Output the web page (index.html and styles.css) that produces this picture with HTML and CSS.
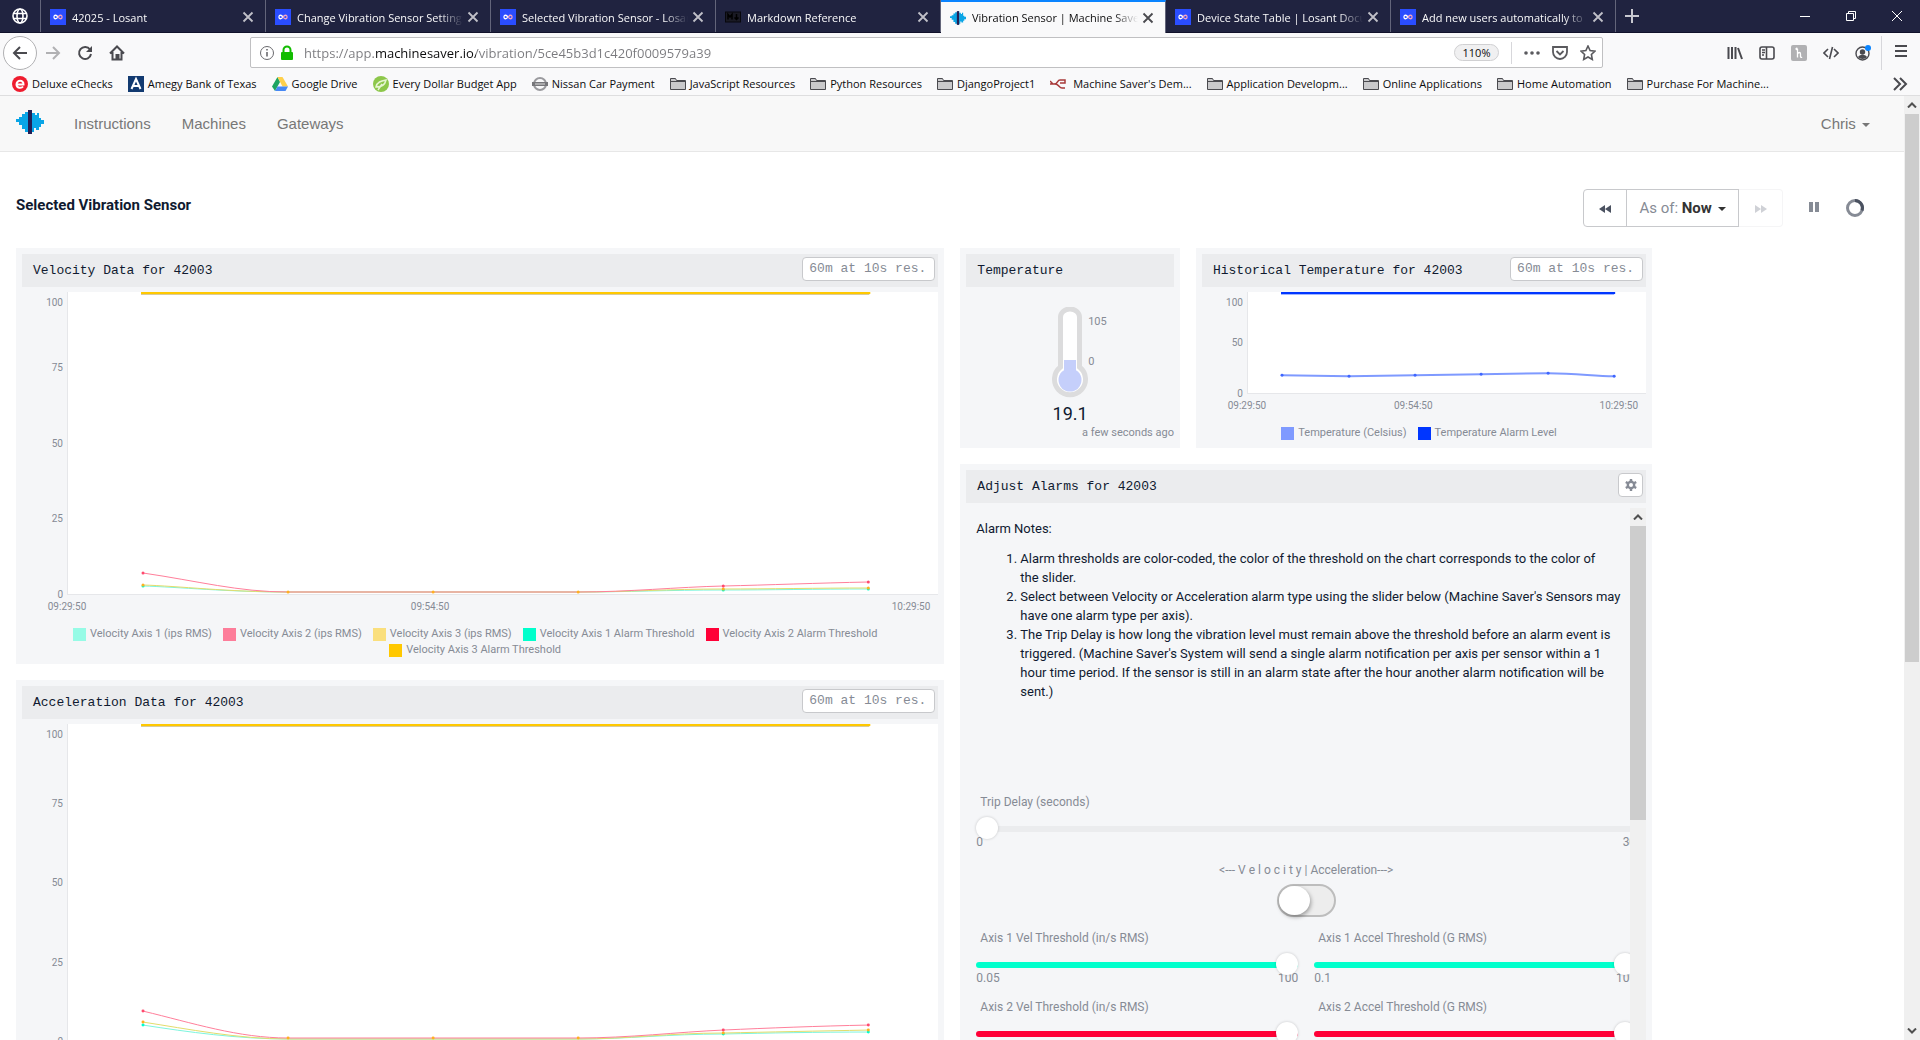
FILE: index.html
```html
<!DOCTYPE html>
<html lang="en">

<head>
    <meta charset="UTF-8">
    <meta name="viewport" content="width=device-width, initial-scale=1.0">
    <title>Vibration Sensor | Machine Saver</title>
    <link rel="stylesheet" href="styles.css">
</head>

<body>
    <!-- shared icons -->
    <svg class="defs" width="0" height="0">
        <symbol id="losant" viewBox="0 0 16 16">
            <rect width="16" height="16" fill="#2a4dff" />
            <path d="M8 8C6.500 5.800 4 5.500 4 8s2.500 2.200 4 0" fill="none" stroke="#fff" stroke-width="1.300" />
            <path d="M8 8c1.500 2.200 4 2.500 4 0S9.500 5.800 8 8" fill="none" stroke="#f3a3c0" stroke-width="1.300" />
        </symbol>
        <symbol id="saver" viewBox="0 0 28 24">
            <path d="M0 9h3V7h3V4h3V2h4V0h3v24h-3v-2H9v-3H6v-4H3v-3H0z" fill="#0aa5e6" />
            <path d="M16 3h3v2h2V3h2v5h2v2h3v4h-3v3h-2v3h-3v-2h-2v4h-2z" fill="#0aa5e6" />
            <path d="M12 0h4v24h-4z" fill="#231f54" />
        </symbol>
        <symbol id="close" viewBox="0 0 12 12">
            <path d="M1.500 1.500l9 9M10.500 1.500l-9 9" stroke="currentColor" stroke-width="1.800" />
        </symbol>
        <symbol id="folder" viewBox="0 0 16 16">
            <path d="M.5 13.500V2.500h5l1 2h9v9z" fill="#c9c9cb" stroke="#4a4a4f" />
            <path d="M1 5.500h14" stroke="#4a4a4f" />
        </symbol>
        <symbol id="up" viewBox="0 0 10 6">
            <path d="M1 5.500l4-4 4 4" fill="none" stroke="#505050" stroke-width="2" />
        </symbol>
        <symbol id="down" viewBox="0 0 10 6">
            <path d="M1 .5l4 4 4-4" fill="none" stroke="#505050" stroke-width="2" />
        </symbol>
    </svg>

    <div class="tab-bar">
        <div class="tab pinned">
            <svg width="18" height="18" viewBox="0 0 18 18" fill="none" stroke="#fff" stroke-width="1.600">
                <circle cx="9" cy="9" r="7" />
                <ellipse cx="9" cy="9" rx="3" ry="7" />
                <path d="M2.500 6.500h13M2.500 11.500h13" />
            </svg>
        </div>
        <div class="tab">
            <svg class="icon"><use href="#losant" /></svg>
            <span class="tab-title">42025 - Losant</span>
            <button class="close" aria-label="Close tab"><svg><use href="#close" /></svg></button>
        </div>
        <div class="tab">
            <svg class="icon"><use href="#losant" /></svg>
            <span class="tab-title">Change Vibration Sensor Settings</span>
            <button class="close" aria-label="Close tab"><svg><use href="#close" /></svg></button>
        </div>
        <div class="tab">
            <svg class="icon"><use href="#losant" /></svg>
            <span class="tab-title">Selected Vibration Sensor - Losant</span>
            <button class="close" aria-label="Close tab"><svg><use href="#close" /></svg></button>
        </div>
        <div class="tab">
            <svg class="icon" viewBox="0 0 16 16">
                <rect x=".5" y="3" width="15" height="10" fill="#1a1a24" stroke="#07070c" />
                <path d="M3 10.500v-5l2 2.500 2-2.500v5M11.500 5v5M9.500 8.500l2 2 2-2" fill="none" stroke="#000" stroke-width="1.500" />
            </svg>
            <span class="tab-title">Markdown Reference</span>
            <button class="close" aria-label="Close tab"><svg><use href="#close" /></svg></button>
        </div>
        <div class="tab active">
            <svg class="icon"><use href="#saver" /></svg>
            <span class="tab-title">Vibration Sensor | Machine Saver</span>
            <button class="close" aria-label="Close tab"><svg><use href="#close" /></svg></button>
        </div>
        <div class="tab">
            <svg class="icon"><use href="#losant" /></svg>
            <span class="tab-title">Device State Table | Losant Documentation</span>
            <button class="close" aria-label="Close tab"><svg><use href="#close" /></svg></button>
        </div>
        <div class="tab">
            <svg class="icon"><use href="#losant" /></svg>
            <span class="tab-title">Add new users automatically to</span>
            <button class="close" aria-label="Close tab"><svg><use href="#close" /></svg></button>
        </div>
        <button class="new-tab" aria-label="New tab">
            <svg width="14" height="14" viewBox="0 0 14 14"><path d="M7 0v14M0 7h14" stroke="#c8c8d0" stroke-width="2" /></svg>
        </button>
        <div class="window-btns">
            <button aria-label="Minimize"><svg viewBox="0 0 10 10"><path d="M0 5.500h10" /></svg></button>
            <button aria-label="Restore"><svg viewBox="0 0 10 10"><path d="M.5 2.500h7v7h-7zM2.500 2.500v-2h7v7h-2" /></svg></button>
            <button aria-label="Close"><svg viewBox="0 0 10 10"><path d="M0 0l10 10M10 0L0 10" /></svg></button>
        </div>
    </div>

    <div class="nav-bar">
        <button class="back" aria-label="Back">
            <svg viewBox="0 0 16 16"><path d="M15 8H2M8 2L2 8l6 6" /></svg>
        </button>
        <button class="tool forward" aria-label="Forward">
            <svg viewBox="0 0 16 16"><path d="M1 8h13M8 2l6 6-6 6" /></svg>
        </button>
        <button class="tool" aria-label="Reload">
            <svg viewBox="0 0 16 16"><path d="M13 4.500A6 6 0 1 0 14 9" /><path d="M15 1v6H9z" fill="#4a4a4f" stroke="none" /></svg>
        </button>
        <button class="tool" aria-label="Home">
            <svg viewBox="0 0 16 16"><path d="M1 8.500L8 1.500l7 7M3.500 7v7.500h9V7M7.500 14v-4h2v4" /></svg>
        </button>
        <div class="url-bar">
            <svg class="icon" viewBox="0 0 16 16" fill="none" stroke="#6a6a6e">
                <circle cx="8" cy="8" r="6.500" />
                <path d="M8 7v4.500M8 4v1.600" stroke-width="1.600" />
            </svg>
            <svg class="icon" viewBox="0 0 16 16">
                <path d="M4.500 7.500V5a3.500 3.500 0 0 1 7 0v2.500" fill="none" stroke="#12bc00" stroke-width="2" />
                <rect x="2" y="7" width="12" height="8" rx="1" fill="#12bc00" />
            </svg>
            <input class="url" type="text" aria-label="Address" value="https://app.machinesaver.io/vibration/5ce45b3d1c420f0009579a39">
            <button class="zoom">110%</button>
            <span class="url-line"></span>
            <svg class="icon" viewBox="0 0 16 16" fill="#5a5a5e"><circle cx="2" cy="8" r="1.800" /><circle cx="8" cy="8" r="1.800" /><circle cx="14" cy="8" r="1.800" /></svg>
            <svg class="icon" viewBox="0 0 16 16" fill="none" stroke="#5a5a5e" stroke-width="1.800"><path d="M1 2h14v5a7 7 0 0 1-14 0z" /><path d="M4.500 6L8 9.500 11.500 6" /></svg>
            <svg class="icon" viewBox="0 0 16 16" fill="none" stroke="#5a5a5e" stroke-width="1.600"><path d="M8 1l2.100 4.500 4.900.6-3.600 3.400.9 4.900L8 12l-4.300 2.400.9-4.900L1 6.100l4.900-.6z" /></svg>
        </div>
        <div class="nav-tools">
            <svg class="icon" viewBox="0 0 16 16" stroke="#4a4a4f" stroke-width="2"><path d="M1.500 2v12M5 2v12M8.500 2v12M11 3l4 11" /></svg>
            <svg class="icon" viewBox="0 0 16 16" fill="none" stroke="#4a4a4f" stroke-width="1.600"><rect x="1" y="2" width="14" height="12" rx="2" /><path d="M7.500 2v12M3 5h3M3 7.500h3M3 10h2" /></svg>
            <svg class="icon" viewBox="0 0 16 16"><rect width="16" height="16" rx="2" fill="#b1b1b3" /><path d="M6.500 3.500c-2-1-2 1.500 0 1v8M6.500 9c1-2 3-2 3 0v2.500c0 1 1 1 1.500.5" fill="none" stroke="#fff" stroke-width="1.300" /></svg>
            <svg class="icon" viewBox="0 0 16 16" fill="none" stroke="#4a4a4f" stroke-width="1.600"><path d="M5 4L1 8l4 4M11 4l4 4-4 4M9.500 2l-3 12" /></svg>
            <svg class="icon" viewBox="0 0 16 16"><circle cx="7.500" cy="8.500" r="6.500" fill="none" stroke="#4a4a4f" stroke-width="1.400" /><circle cx="7.500" cy="7" r="2.700" fill="#4a4a4f" /><path d="M3 12c2-3 7-3 9 0-2 2.500-7 2.500-9 0z" fill="#4a4a4f" /><circle cx="13" cy="3" r="3" fill="#0a84ff" /></svg>
        </div>
        <button class="menu" aria-label="Menu">
            <svg class="icon" viewBox="0 0 16 16" stroke="#4a4a4f" stroke-width="2"><path d="M2 3h12M2 8h12M2 13h12" /></svg>
        </button>
    </div>

    <div class="bookmarks">
        <a href="#"><svg class="icon" viewBox="0 0 16 16"><circle cx="8" cy="8" r="8" fill="#ef1c2e" /><path d="M4.500 8.500h7c.3-5-7-5-7 0 0 4 5 4 6.500 2" fill="none" stroke="#fff" stroke-width="2" /></svg>Deluxe eChecks</a>
        <a href="#"><svg class="icon" viewBox="0 0 16 16"><rect width="16" height="16" fill="#123a70" /><path d="M3.500 13L8 3l4.500 10M5 10h6" fill="none" stroke="#fff" stroke-width="2" /></svg>Amegy Bank of Texas</a>
        <a href="#"><svg class="icon" viewBox="0 0 16 16"><path d="M5.500 1L0 10.500 3 15l5-9z" fill="#1da462" /><path d="M5.500 1h5L16 10.500h-5.500z" fill="#ffd04b" /><path d="M3 15l2.500-4.500H16L13.500 15z" fill="#4688f4" /></svg>Google Drive</a>
        <a href="#"><svg class="icon" viewBox="0 0 16 16"><circle cx="8" cy="8" r="8" fill="#8dc74a" /><path d="M3 11c1-5 5-6 10-7-1 5-4 7-10 7zM5 14l4-6" fill="none" stroke="#e6f5d2" stroke-width="1.500" /></svg>Every Dollar Budget App</a>
        <a href="#"><svg class="icon" viewBox="0 0 16 16"><circle cx="8" cy="8" r="6" fill="none" stroke="#9a9a9e" stroke-width="2" /><rect y="6" width="16" height="4" fill="#77777b" /><path d="M3 8h10" stroke="#ddd" /></svg>Nissan Car Payment</a>
        <a href="#"><svg class="icon"><use href="#folder" /></svg>JavaScript Resources</a>
        <a href="#"><svg class="icon"><use href="#folder" /></svg>Python Resources</a>
        <a href="#"><svg class="icon"><use href="#folder" /></svg>DjangoProject1</a>
        <a href="#"><svg class="icon" viewBox="0 0 16 16" fill="none" stroke="#a83a3a" stroke-width="1.500"><path d="M0 8h4c4 0 3-4 6-4h5v3h-5M0 5l3 3M5 8c4 0 4 4 7 4h3" /></svg>&nbsp;Machine Saver's Dem...</a>
        <a href="#"><svg class="icon"><use href="#folder" /></svg>Application Developm...</a>
        <a href="#"><svg class="icon"><use href="#folder" /></svg>Online Applications</a>
        <a href="#"><svg class="icon"><use href="#folder" /></svg>Home Automation</a>
        <a href="#"><svg class="icon"><use href="#folder" /></svg>Purchase For Machine...</a>
        <button class="more" aria-label="More bookmarks"><svg class="icon" viewBox="0 0 16 16" fill="none" stroke="#4a4a4f" stroke-width="2"><path d="M2 2l6 6-6 6M8 2l6 6-6 6" /></svg></button>
    </div>

    <div class="viewport">
        <div class="page">
            <header>
                <a class="logo" href="#" aria-label="Machine Saver"><svg width="28" height="24"><use href="#saver" /></svg></a>
                <nav>
                    <a href="#">Instructions</a>
                    <a href="#">Machines</a>
                    <a href="#">Gateways</a>
                </nav>
                <button class="user">Chris <span class="caret"></span></button>
            </header>

            <main>
                <div class="title-row">
                    <h1>Selected Vibration Sensor</h1>
                    <div class="time-controls">
                        <button class="prev" aria-label="Back in time"><svg width="12" height="8" viewBox="0 0 12 8"><path d="M6 0v8L0 4zM12 0v8L6 4z" fill="#4a5160" /></svg></button>
                        <button class="as-of">As of: <b>Now</b> <span class="caret"></span></button>
                        <button class="next" aria-label="Forward in time" disabled><svg width="12" height="8" viewBox="0 0 12 8"><path d="M0 0v8l6-4zM6 0v8l6-4z" fill="#cfd1d6" /></svg></button>
                    </div>
                    <button class="pause" aria-label="Pause"><svg width="10" height="10" viewBox="0 0 10 10"><path d="M0 0h4v10H0zM6 0h4v10H6z" fill="#868b95" /></svg></button>
                    <svg width="20" height="20" viewBox="0 0 20 20" fill="none" stroke-width="3">
                        <circle cx="10" cy="10" r="7.500" stroke="#868b95" />
                        <path d="M10 2.500a7.500 7.500 0 0 1 7 10" stroke="#4a5160" />
                    </svg>
                </div>

                <div class="dashboard">
                    <div class="column">
                        <section class="block">
                            <div class="block-head">
                                <h2>Velocity Data for 42003</h2>
                                <span class="res">60m at 10s res.</span>
                            </div>
                            <div class="chart velocity">
                                <div class="y-axis"><span>100</span><span>75</span><span>50</span><span>25</span><span>0</span></div>
                                <svg class="plot" viewBox="0 0 870 302" preserveAspectRatio="none">
                                    <path class="line threshold-shade" d="M73 2.500H801" />
                                    <path class="line threshold" d="M73 1H802" />
                                    <path class="line axis1" d="M75 294C110 295 160 300 220 300H510C560 300 600 298 655 298C700 298 750 297 800 297" />
                                    <path class="line axis3" d="M75 293C110 294 160 300 220 300H510C560 300 600 297 655 297C700 297 750 296 800 296" />
                                    <path class="line axis2" d="M75 281C130 289 170 300 220 300H510C560 300 610 295 655 294C700 293 750 291 800 290" />
                                    <g fill="#00ffcc"><circle cx="75" cy="294" r="1.500" /><circle cx="655" cy="298" r="1.500" /><circle cx="800" cy="297" r="1.500" /></g>
                                    <g fill="#ffb020"><circle cx="75" cy="293" r="1.500" /><circle cx="220" cy="300" r="1.500" /><circle cx="365" cy="300" r="1.500" /><circle cx="510" cy="300" r="1.500" /><circle cx="655" cy="297" r="1.500" /><circle cx="800" cy="296" r="1.500" /></g>
                                    <g fill="#ff4a6e"><circle cx="75" cy="281" r="1.500" /><circle cx="655" cy="294" r="1.500" /><circle cx="800" cy="290" r="1.500" /></g>
                                </svg>
                                <div class="x-axis"><span>09:29:50</span><span>09:54:50</span><span class="last">10:29:50</span></div>
                            </div>
                            <ul class="legend">
                                <li class="vel1">Velocity Axis 1 (ips RMS)</li>
                                <li class="vel2">Velocity Axis 2 (ips RMS)</li>
                                <li class="vel3">Velocity Axis 3 (ips RMS)</li>
                                <li class="alarm1">Velocity Axis 1 Alarm Threshold</li>
                                <li class="alarm2">Velocity Axis 2 Alarm Threshold</li>
                                <li class="alarm3">Velocity Axis 3 Alarm Threshold</li>
                            </ul>
                        </section>

                        <section class="block">
                            <div class="block-head">
                                <h2>Acceleration Data for 42003</h2>
                                <span class="res">60m at 10s res.</span>
                            </div>
                            <div class="chart acceleration">
                                <div class="y-axis"><span>100</span><span>75</span><span>50</span><span>25</span><span>0</span></div>
                                <svg class="plot" viewBox="0 0 870 318" preserveAspectRatio="none">
                                    <path class="line threshold-shade" d="M73 2.500H801" />
                                    <path class="line threshold" d="M73 1H802" />
                                    <path class="line axis1" d="M75 302C120 309 170 316 220 316H510C560 316 600 311 655 311C700 310 750 309 800 309" />
                                    <path class="line axis3" d="M75 299C120 306 170 316 220 316H510C560 316 600 310 655 310C700 309 750 308 800 307" />
                                    <path class="line axis2" d="M75 288C125 300 170 315 220 315H510C560 315 610 309 655 307C700 305 750 303 800 302" />
                                    <g fill="#00ffcc"><circle cx="75" cy="302" r="1.500" /><circle cx="655" cy="311" r="1.500" /><circle cx="800" cy="309" r="1.500" /></g>
                                    <g fill="#ffb020"><circle cx="75" cy="299" r="1.500" /><circle cx="220" cy="315" r="1.500" /><circle cx="365" cy="315" r="1.500" /><circle cx="510" cy="315" r="1.500" /><circle cx="655" cy="310" r="1.500" /><circle cx="800" cy="307" r="1.500" /></g>
                                    <g fill="#ff4a6e"><circle cx="75" cy="288" r="1.500" /><circle cx="655" cy="307" r="1.500" /><circle cx="800" cy="302" r="1.500" /></g>
                                </svg>
                            </div>
                        </section>
                    </div>

                    <div class="column">
                        <div class="temps">
                            <section class="block">
                                <div class="block-head">
                                    <h2>Temperature</h2>
                                </div>
                                <div class="gauge">
                                    <svg width="36" height="92" viewBox="0 0 36 92">
                                        <path d="M8.500 60V10a9.500 8 0 0 1 19 0v50a15.500 15.500 0 1 1-19 0z" fill="#fff" stroke="#dcdcdd" stroke-width="5" />
                                        <path d="M12 53h12v11H12z" fill="#c5cffb" />
                                        <circle cx="18" cy="73" r="11.500" fill="#c5cffb" />
                                    </svg>
                                    <div class="scale"><span>105</span><span>0</span></div>
                                </div>
                                <p class="reading">19.1</p>
                                <p class="ago">a few seconds ago</p>
                            </section>

                            <section class="block">
                                <div class="block-head">
                                    <h2>Historical Temperature for 42003</h2>
                                    <span class="res">60m at 10s res.</span>
                                </div>
                                <div class="chart history">
                                    <div class="y-axis"><span>100</span><span>50</span><span>0</span></div>
                                    <svg class="plot" viewBox="0 0 398 102" preserveAspectRatio="none">
                                        <path class="line limit-shade" d="M33 2.500H366" />
                                        <path class="line limit" d="M33 1H367" />
                                        <path class="line temp" d="M34 84L101 85L167 84L233 83L300 82C330 82 345 85 366 85" />
                                        <g fill="#3f66ff"><circle cx="34" cy="84" r="1.500" /><circle cx="101" cy="85" r="1.500" /><circle cx="167" cy="84" r="1.500" /><circle cx="233" cy="83" r="1.500" /><circle cx="300" cy="82" r="1.500" /><circle cx="366" cy="85" r="1.500" /></g>
                                    </svg>
                                    <div class="x-axis"><span>09:29:50</span><span>09:54:50</span><span class="last">10:29:50</span></div>
                                </div>
                                <ul class="legend">
                                    <li class="celsius">Temperature (Celsius)</li>
                                    <li class="alarm-level">Temperature Alarm Level</li>
                                </ul>
                            </section>
                        </div>

                        <section class="block alarms">
                            <div class="block-head">
                                <h2>Adjust Alarms for 42003</h2>
                                <button class="gear" aria-label="Settings">
                                    <svg width="12" height="12" viewBox="0 0 12 12"><circle cx="6" cy="6" r="3.200" fill="none" stroke="#868b95" stroke-width="2.400" /><path d="M6 0v2.500M6 9.500V12M.8 3L3 4.300M9 7.700L11.200 9M11.200 3L9 4.300M3 7.700L.8 9" stroke="#868b95" stroke-width="2.400" /></svg>
                                </button>
                            </div>
                            <div class="scroll-area">
                                <div class="scroll-view">
                                    <form class="alarm-form">
                                        <div class="notes">
                                            <p>Alarm Notes:</p>
                                            <ol>
                                                <li>Alarm thresholds are color-coded, the color of the threshold on the chart corresponds to the color of<br> the slider.</li>
                                                <li>Select between Velocity or Acceleration alarm type using the slider below (Machine Saver's Sensors may<br> have one alarm type per axis).</li>
                                                <li>The Trip Delay is how long the vibration level must remain above the threshold before an alarm event is<br> triggered. (Machine Saver's System will send a single alarm notification per axis per sensor within a 1<br> hour time period. If the sensor is still in an alarm state after the hour another alarm notification will be<br> sent.)</li>
                                            </ol>
                                        </div>
                                        <div class="slider">
                                            <label for="trip">Trip Delay (seconds)</label>
                                            <input type="range" id="trip" min="0" max="30" value="0">
                                            <div class="range"><span>0</span><span>30</span></div>
                                        </div>
                                        <div class="toggle">
                                            <label for="type">&lt;--- V e l o c i t y | Acceleration---&gt;</label>
                                            <input type="checkbox" id="type">
                                        </div>
                                        <div class="sliders">
                                            <div class="slider green">
                                                <label for="vel1">Axis 1 Vel Threshold (in/s RMS)</label>
                                                <input type="range" id="vel1" min="0" max="100" value="100">
                                                <div class="range"><span>0.05</span><span>100</span></div>
                                            </div>
                                            <div class="slider green">
                                                <label for="acc1">Axis 1 Accel Threshold (G RMS)</label>
                                                <input type="range" id="acc1" min="0" max="100" value="100">
                                                <div class="range"><span>0.1</span><span>100</span></div>
                                            </div>
                                            <div class="slider red">
                                                <label for="vel2">Axis 2 Vel Threshold (in/s RMS)</label>
                                                <input type="range" id="vel2" min="0" max="100" value="100">
                                                <div class="range"><span>0.05</span><span>100</span></div>
                                            </div>
                                            <div class="slider red">
                                                <label for="acc2">Axis 2 Accel Threshold (G RMS)</label>
                                                <input type="range" id="acc2" min="0" max="100" value="100">
                                                <div class="range"><span>0.1</span><span>100</span></div>
                                            </div>
                                        </div>
                                    </form>
                                </div>
                                <div class="scrollbar">
                                    <svg class="arrow"><use href="#up" /></svg>
                                    <div class="thumb"></div>
                                </div>
                            </div>
                        </section>
                    </div>
                </div>
            </main>
        </div>
        <div class="scrollbar page-scroll">
            <svg class="arrow"><use href="#up" /></svg>
            <div class="thumb"></div>
            <svg class="arrow bottom"><use href="#down" /></svg>
        </div>
    </div>
</body>

</html>
```
FILE: styles.css
```css
* {
    box-sizing: border-box;
}

body {
    margin: 0;
    height: 100vh;
    display: flex;
    flex-direction: column;
    overflow: hidden;
    background-color: #fff;
    font-family: "Open Sans", sans-serif;
    font-size: 11px;
    color: #0c0c0d;
}

button {
    margin: 0;
    padding: 0;
    border: none;
    background: none;
    font: inherit;
    color: inherit;
}

a {
    color: inherit;
    text-decoration: none;
}

h1,
h2,
p,
ul,
ol {
    margin: 0;
    padding: 0;
}

.defs {
    position: absolute;
}

.icon {
    width: 16px;
    height: 16px;
    flex: none;
}

/* browser tabs */
.tab-bar {
    flex: none;
    height: 33px;
    display: flex;
    background-color: #202340;
    border-bottom: 1px solid #11122b;
    color: #f9f9fa;
}

.tab {
    flex: 0 1 225px;
    min-width: 0;
    padding: 2px 11px 0 9px;
    display: flex;
    align-items: center;
    border-right: 1px solid #63657a;
}

.tab.pinned {
    flex: 0 0 41px;
    padding: 0;
    justify-content: center;
}

.tab.active {
    margin-bottom: -1px;
    padding-top: 0;
    background-color: #f9f9fa;
    border-top: 2px solid #0a84ff;
    color: #0c0c0d;
}

.tab-title {
    flex: 1;
    margin-left: 6px;
    overflow: hidden;
    white-space: nowrap;
    mask-image: linear-gradient(to left, transparent, #000 24px);
}

.close {
    width: 12px;
    height: 12px;
    margin-left: 4px;
    color: #c0c0c8;
}

.active .close {
    color: #4a4a4f;
}

.close svg {
    display: block;
    width: 12px;
    height: 12px;
}

.new-tab {
    width: 32px;
    display: flex;
    align-items: center;
    justify-content: center;
}

.window-btns {
    margin-left: auto;
    display: flex;
}

.window-btns button {
    width: 46px;
}

.window-btns svg {
    width: 10px;
    height: 10px;
    fill: none;
    stroke: #fff;
}

/* navigation */
.nav-bar {
    flex: none;
    height: 39px;
    padding: 0 0 0 3px;
    display: flex;
    align-items: center;
    background-color: #f9f9fa;
}

.back {
    width: 34px;
    height: 34px;
    border: 1px solid #b1b1b3;
    border-radius: 50%;
    background-color: #fff;
}

.tool {
    width: 32px;
}

.back svg,
.tool svg {
    display: block;
    width: 16px;
    height: 16px;
    margin: auto;
    fill: none;
    stroke: #4a4a4f;
    stroke-width: 2;
}

.forward svg {
    stroke: #b1b1b3;
}

.url-bar {
    flex: 1;
    height: 31px;
    margin: 0 124px 0 117px;
    padding: 0 6px 0 8px;
    display: flex;
    align-items: center;
    gap: 4px;
    border: 1px solid #c0c0c2;
    border-radius: 2px;
    background-color: #fff;
}

.url {
    flex: 1;
    min-width: 0;
    height: 26px;
    margin-left: 5px;
    padding: 0;
    border: none;
    outline: none;
    font: 13px "Open Sans", sans-serif;
    color: transparent;
    /* domain is darker than the rest of the address */
    background: linear-gradient(to right, #7a7a7e 72px, #0c0c0d 72px, #0c0c0d 172px, #7a7a7e 172px);
    background-clip: text;
    -webkit-background-clip: text;
}

.zoom {
    width: 45px;
    height: 17px;
    border: 1px solid #d0d0d2;
    border-radius: 9px;
    background-color: #f0f0f1;
    line-height: 15px;
}

.url-line {
    width: 1px;
    height: 22px;
    margin: 0 8px;
    background-color: #d7d7db;
}

.url-bar .icon + .icon + .icon,
.url-line ~ .icon + .icon {
    margin-left: 8px;
}

.nav-tools {
    display: flex;
    gap: 16px;
}

.menu {
    height: 34px;
    margin-left: 10px;
    padding: 0 11px;
    border-left: 1px solid #d7d7db;
}

/* bookmarks */
.bookmarks {
    flex: none;
    height: 24px;
    padding: 0 12px;
    display: flex;
    align-items: center;
    gap: 15px;
    background-color: #f9f9fa;
    border-bottom: 1px solid #dededf;
    white-space: nowrap;
}

.bookmarks a {
    display: flex;
    align-items: center;
    gap: 4px;
}

.more {
    margin-left: auto;
    height: 16px;
}

/* page */
.viewport {
    flex: 1;
    min-height: 0;
    display: flex;
}

.page {
    flex: 1;
    min-width: 0;
    overflow: hidden;
}

header {
    height: 56px;
    padding: 0 34px 1px 16px;
    display: flex;
    align-items: center;
    background-color: #f8f8f8;
    border-bottom: 1px solid #e7e7e7;
    font-family: "Liberation Sans", Arial, sans-serif;
    font-size: 15px;
    color: #777;
}

nav {
    display: flex;
    gap: 31px;
    margin-left: 30px;
}

.logo {
    margin-bottom: 3px;
}

.logo svg {
    display: block;
}

.user {
    margin-left: auto;
}

.caret {
    display: inline-block;
    margin-left: 2px;
    border: 4px solid transparent;
    border-top-color: currentColor;
    border-bottom: 0;
    vertical-align: middle;
}

main {
    padding: 37px 16px 0;
    font-family: Roboto, sans-serif;
    color: #101a30;
}

.title-row {
    height: 38px;
    padding-right: 23px;
    display: flex;
    align-items: center;
}

h1 {
    font-size: 15px;
    line-height: 18px;
    padding-bottom: 6px;
}

.time-controls {
    margin-left: auto;
    display: flex;
    font-size: 15px;
}

.time-controls button {
    height: 38px;
    border: 1px solid #c8c9cc;
    background-color: #fff;
    color: #868b95;
}

.time-controls .prev {
    width: 44px;
    border-radius: 4px 0 0 4px;
}

.time-controls .as-of {
    width: 113px;
    margin-left: -1px;
}

.as-of b,
.as-of .caret {
    color: #333;
}

.time-controls .next {
    width: 44px;
    border-color: #f5f5f6;
    border-left: none;
    border-radius: 0 4px 4px 0;
}

.pause {
    width: 62px;
}

.dashboard {
    width: 87.4%;
    margin-top: 21px;
    display: grid;
    grid-template-columns: 573fr 427fr;
    gap: 16px;
}

.column {
    min-width: 0;
    display: flex;
    flex-direction: column;
    gap: 16px;
}

.temps {
    height: 200px;
    display: grid;
    grid-template-columns: 13fr 27fr;
    gap: 16px;
}

.block {
    min-width: 0;
    padding: 6px;
    background-color: #f5f6f8;
}

.block-head {
    height: 33px;
    padding: 0 3px 0 11px;
    display: flex;
    align-items: center;
    justify-content: space-between;
    background-color: #ebecee;
}

h2 {
    font-family: "Liberation Mono", monospace;
    font-size: 13px;
    font-weight: normal;
    white-space: nowrap;
}

.res {
    height: 24px;
    margin-bottom: 3px;
    padding: 0 8px 0 6px;
    border: 1px solid #c8c9cc;
    border-radius: 4px;
    background-color: #fff;
    font-family: "Liberation Mono", monospace;
    font-size: 13px;
    line-height: 22px;
    color: #868b95;
    white-space: nowrap;
}

/* charts */
.chart {
    margin-top: 5px;
    display: grid;
    grid-template-columns: 45px 1fr;
    grid-template-rows: 303px 24px;
    font-size: 10px;
    color: #868b95;
}

.chart.acceleration {
    grid-template-rows: 318px 24px;
}

.chart.history {
    grid-template-rows: 102px 24px;
}

.y-axis {
    padding-right: 4px;
    display: flex;
    flex-direction: column;
    justify-content: space-between;
    text-align: right;
}

.y-axis span {
    height: 0;
    line-height: 0;
}

.y-axis span:first-child {
    line-height: 22px;
}

.plot {
    width: 100%;
    height: 100%;
    background-color: #fff;
    border-left: 1px solid #e6e7ea;
    border-bottom: 1px solid #e6e7ea;
}

.x-axis {
    grid-column: 2;
    display: grid;
    grid-template-columns: 5fr 7fr 0;
    line-height: 24px;
}

.x-axis span {
    width: 0;
    display: flex;
    justify-content: center;
}

.x-axis .last {
    justify-content: flex-end;
    margin-left: -8px;
}

.line {
    fill: none;
    stroke-width: 1;
    vector-effect: non-scaling-stroke;
}

.threshold {
    stroke: #ffc800;
    stroke-width: 2;
}

.threshold-shade {
    stroke: #d9cb98;
}

.axis1 {
    stroke: #7df5de;
}

.axis2 {
    stroke: #ff7f9b;
}

.axis3 {
    stroke: #e3dc6c;
}

.limit {
    stroke: #0036ff;
    stroke-width: 2;
}

.limit-shade {
    stroke: #9fb3ff;
}

.temp {
    stroke: #7f9aff;
    stroke-width: 2;
}

.legend {
    display: flex;
    flex-wrap: wrap;
    justify-content: center;
    column-gap: 11px;
    margin-top: 7px;
    padding: 0 16px 0 6px;
    list-style: none;
    font-size: 11px;
    line-height: 16px;
    color: #868b95;
}

.legend li {
    display: flex;
    align-items: center;
    white-space: nowrap;
}

.legend li::before {
    content: "";
    width: 13px;
    height: 13px;
    margin-right: 4px;
}

.vel1::before {
    background-color: #96fbe6;
}

.vel2::before {
    background-color: #fd7d9a;
}

.vel3::before {
    background-color: #fadf7d;
}

.alarm1::before {
    background-color: #00ffcc;
}

.alarm2::before {
    background-color: #ff0037;
}

.alarm3::before {
    background-color: #ffc800;
}

.celsius::before {
    background-color: #7f9aff;
}

.alarm-level::before {
    background-color: #0036ff;
}

/* thermometer */
.gauge {
    display: flex;
    justify-content: center;
    margin: 20px 0 0 36px;
    color: #868b95;
}

.scale {
    width: 36px;
    padding: 8px 0 0;
    display: flex;
    flex-direction: column;
    gap: 26px;
    line-height: 14px;
}

.reading {
    margin-top: 5px;
    font-size: 18px;
    line-height: 20px;
    text-align: center;
}

.ago {
    font-size: 11px;
    line-height: 18px;
    text-align: right;
    color: #868b95;
}

/* alarms */
.gear {
    width: 25px;
    height: 24px;
    margin-bottom: 3px;
    border: 1px solid #c8c9cc;
    border-radius: 4px;
    background-color: #fff;
}

.gear svg {
    display: block;
    margin: auto;
}

.scroll-area {
    height: 640px;
    margin-top: 5px;
    display: flex;
}

.scroll-view {
    flex: 1;
    min-width: 0;
    overflow: hidden;
}

.alarm-form {
    margin-right: -6px;
    padding: 11px 0 0 10px;
    font-size: 12px;
    line-height: 18px;
    color: #868b95;
}

.notes {
    height: 274px;
    font-size: 13px;
    line-height: 19px;
    color: #101a30;
    white-space: nowrap;
}

.notes ol {
    margin-top: 11px;
    padding-left: 44px;
}

.slider label {
    display: block;
    padding-left: 4px;
}

.slider input {
    appearance: none;
    position: relative;
    display: block;
    width: 100%;
    height: 22px;
    margin: 7px 0 0;
    background: none;
}

.slider input::-webkit-slider-runnable-track {
    height: 6px;
    border-radius: 3px;
    background-color: #ebecee;
}

.slider input::-webkit-slider-thumb {
    appearance: none;
    width: 22px;
    height: 22px;
    margin-top: -9px;
    border-radius: 50%;
    background-color: #fff;
    box-shadow: 0 0 3px rgba(0, 0, 0, 0.2);
}

.green input::-webkit-slider-runnable-track {
    background-color: #00ffcc;
}

.red input::-webkit-slider-runnable-track {
    background-color: #ff0037;
}

.range {
    margin-top: -7px;
    display: flex;
    justify-content: space-between;
}

.toggle {
    margin-top: 10px;
    display: flex;
    flex-direction: column;
    align-items: center;
}

.toggle input {
    appearance: none;
    width: 59px;
    height: 33px;
    margin: 5px 0 12px;
    border: 2px solid #bdbdbd;
    border-radius: 17px;
    background-color: #ededed;
}

.toggle input::before {
    content: "";
    display: block;
    width: 31px;
    height: 29px;
    border-radius: 50%;
    background-color: #fff;
    box-shadow: 1px 2px 4px rgba(0, 0, 0, 0.35);
}

.sliders {
    display: grid;
    grid-template-columns: 1fr 1fr;
    gap: 11px 16px;
}

/* scrollbars */
.scrollbar {
    flex: none;
    width: 16px;
    display: flex;
    flex-direction: column;
    align-items: center;
    background-color: #f0f0f0;
}

.scrollbar .arrow {
    width: 10px;
    height: 6px;
    margin: 6px 0;
}

.scrollbar .thumb {
    width: 100%;
    height: 46%;
    background-color: #cdcdcd;
}

.page-scroll .thumb {
    width: 14px;
    height: 58%;
}

.scrollbar .bottom {
    margin-top: auto;
}
```
